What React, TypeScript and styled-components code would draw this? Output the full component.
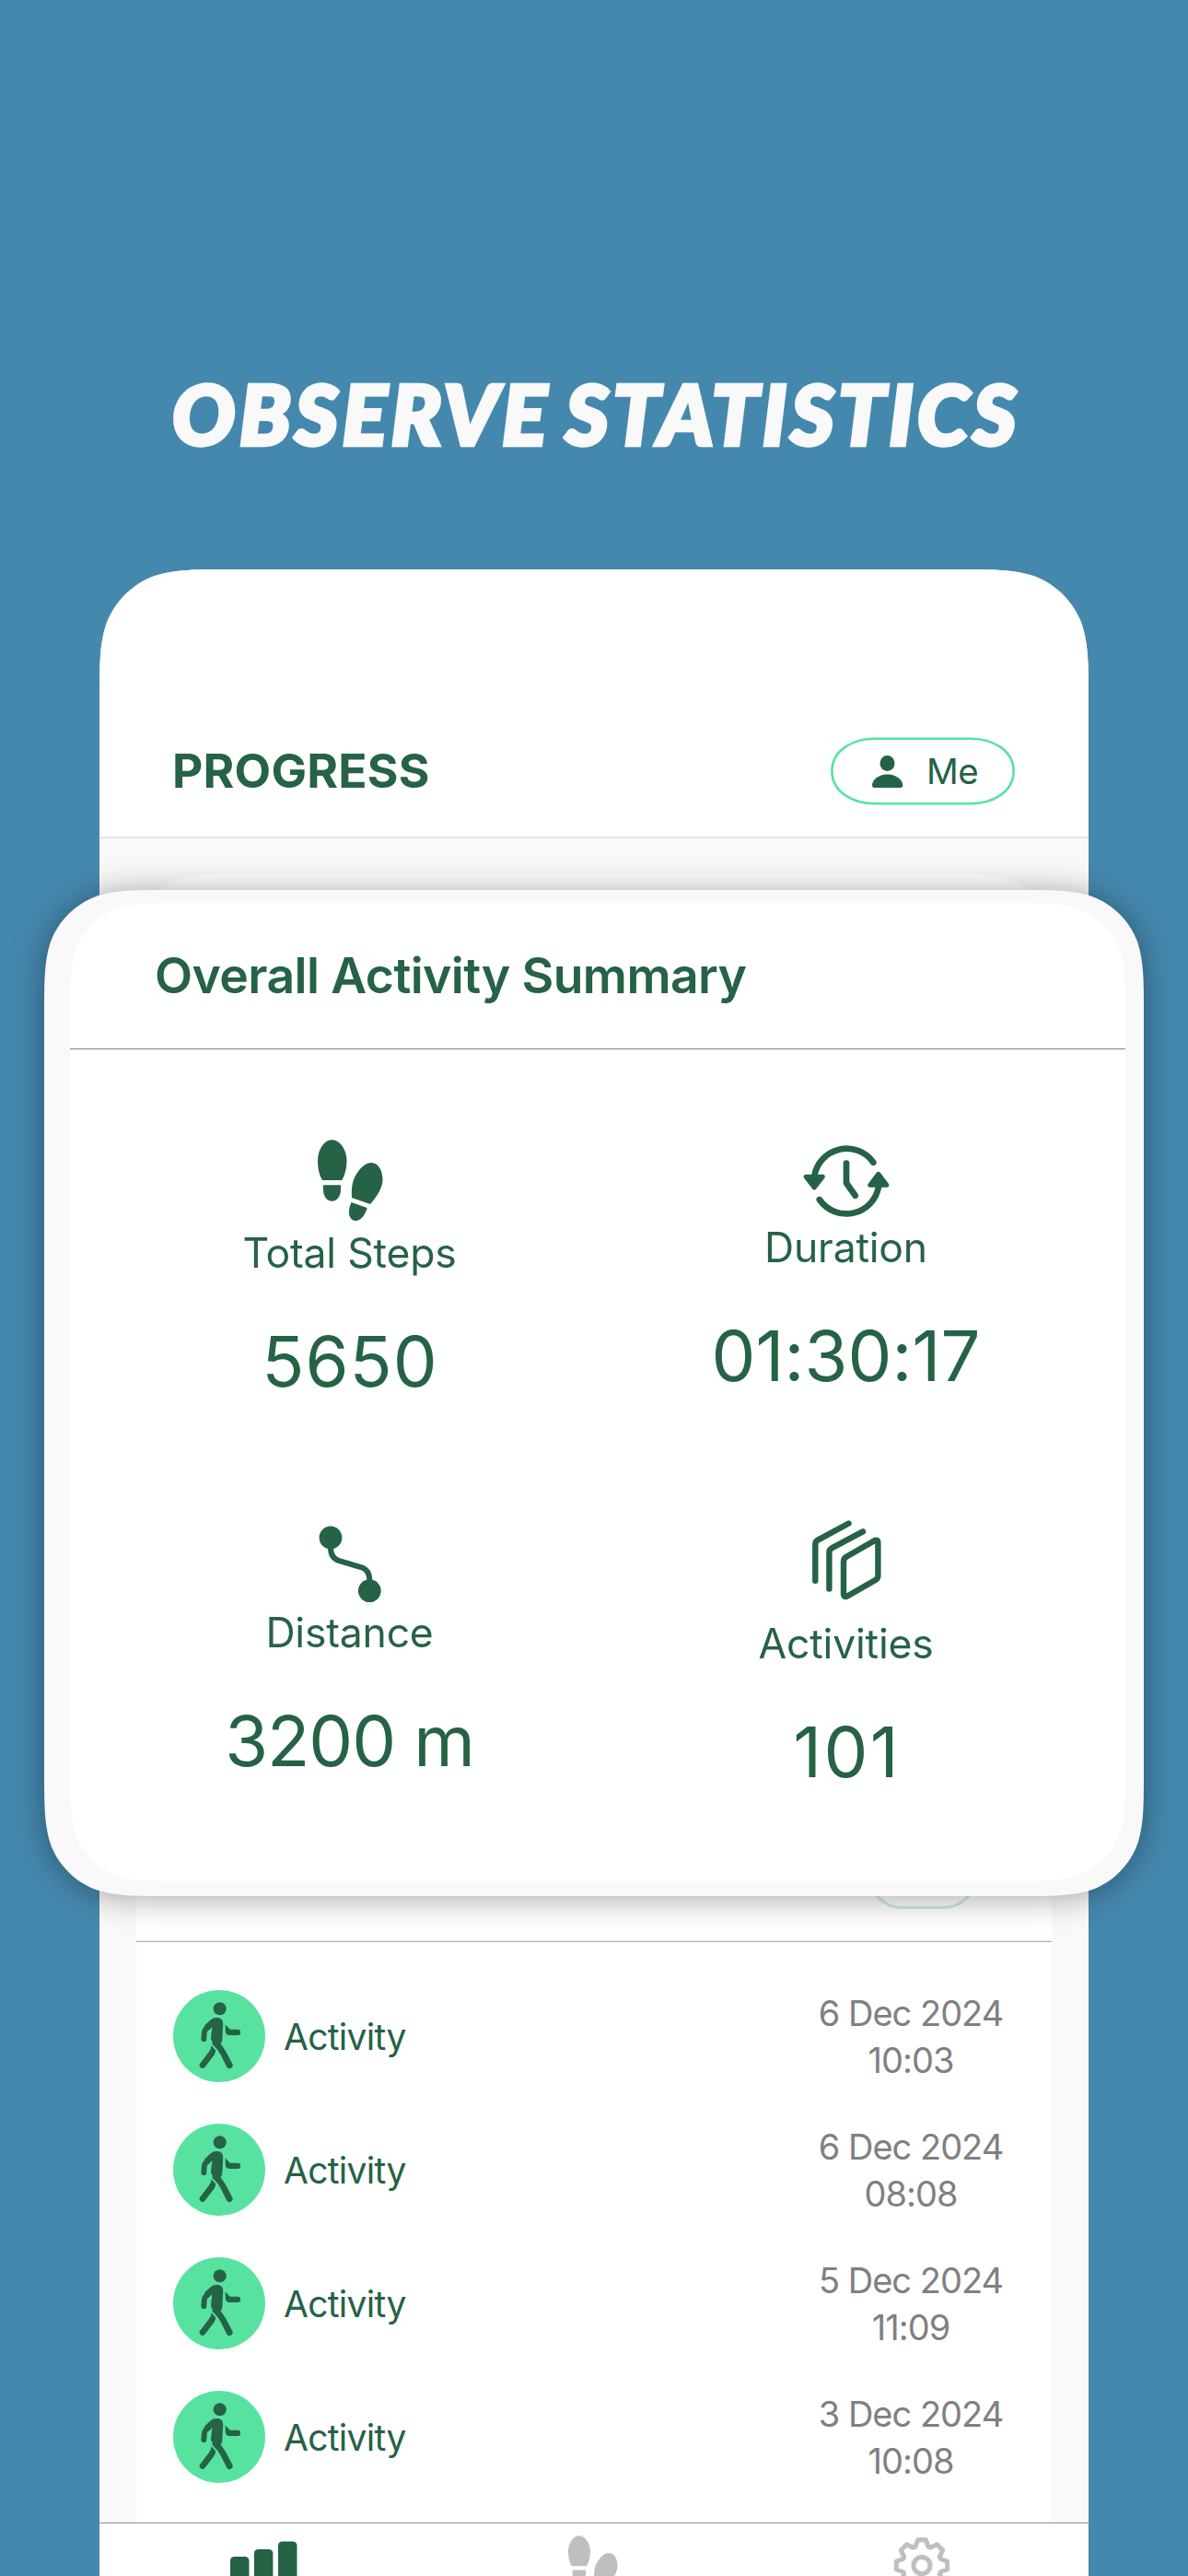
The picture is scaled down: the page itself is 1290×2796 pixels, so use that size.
import React from 'react';
import styled, { createGlobalStyle } from 'styled-components';

const GREEN = '#256246';
const MINT = '#58e2a0';
const GREY = '#bfbfbf';

/** iOS style continuous corners, as a path usable by clip-path */
function smoothRect(w: number, h: number, r: number, roundBottom = true): string {
  const a = 1.528665 * r;
  const b = 1.08849296 * r;
  const c = 0.86840694 * r;
  const d = 0.63149379 * r;
  const e = 0.37282383 * r;
  const f = 0.16905956 * r;
  const g = 0.07491139 * r;

  const top = `M${a} 0 L${w - a} 0 C${w - b} 0 ${w - c} 0 ${w - d} ${g} C${w - e} ${f} ${w - f} ${e} ${w - g} ${d} C${w} ${c} ${w} ${b} ${w} ${a}`;
  const bottom = roundBottom
    ? `L${w} ${h - a} C${w} ${h - b} ${w} ${h - c} ${w - g} ${h - d} C${w - f} ${h - e} ${w - e} ${h - f} ${w - d} ${h - g} C${w - c} ${h} ${w - b} ${h} ${w - a} ${h} L${a} ${h} C${b} ${h} ${c} ${h} ${d} ${h - g} C${e} ${h - f} ${f} ${h - e} ${g} ${h - d} C0 ${h - c} 0 ${h - b} 0 ${h - a}`
    : `L${w} ${h} L0 ${h}`;

  return `${top} ${bottom} L0 ${a} C0 ${b} 0 ${c} ${g} ${d} C${f} ${e} ${e} ${f} ${d} ${g} C${c} 0 ${b} 0 ${a} 0 Z`;
}

function gearPath(cx: number, cy: number): string {
  const point = (radius: number, deg: number) => {
    const rad = (deg * Math.PI) / 180;

    return `${(cx + radius * Math.sin(rad)).toFixed(2)} ${(cy - radius * Math.cos(rad)).toFixed(2)}`;
  };

  const teeth = Array.from({ length: 8 }, (_, i) => i * 45).map((deg) =>
    [point(21.5, deg - 19), point(28, deg - 9), point(28, deg + 9), point(21.5, deg + 19)].join(' L')
  );

  return `M${teeth.join(' L')} Z`;
}

const GlobalStyle = createGlobalStyle`
  html,
  body {
    margin: 0;
    background: #4588ae;
  }

  * {
    box-sizing: border-box;
  }

  svg {
    display: block;
    flex-shrink: 0;
  }
`;

const Page = styled.main`
  position: relative;
  display: flex;
  flex-direction: column;
  align-items: center;
  width: 1290px;
  height: 2796px;
  overflow: hidden;
  background: #4588ae;
  color: ${GREEN};
  font-family: Inter, 'Liberation Sans', sans-serif;
`;

const Headline = styled.h1`
  display: flex;
  align-items: center;
  justify-content: center;
  height: 618px;
  margin: 0;
  padding: 277px 0 0 5px;
  color: #f9f9f9;
  font: italic 900 90px/110px Lato, sans-serif;
  letter-spacing: 4.7px;
  word-spacing: -8px;
  white-space: nowrap;
  -webkit-text-stroke: 4.5px #f9f9f9;
`;

const Phone = styled.section`
  display: flex;
  flex-direction: column;
  width: 1074px;
  height: 2178px;
  background: #f9f9f9;
  clip-path: path('${smoothRect(1074, 2178, 95, false)}');
`;

const PhoneHeader = styled.header`
  display: flex;
  align-items: flex-start;
  justify-content: space-between;
  height: 292px;
  padding: 182px 80px 0 79px;
  border-bottom: 2px solid #e5e5e5;
  background: #fff;
`;

const ScreenTitle = styled.h2`
  margin: 0;
  font-size: 51.5px;
  font-weight: 700;
  letter-spacing: 0.2px;
  line-height: 73px;
`;

const MeButton = styled.div`
  display: grid;
  width: 200px;
  height: 74px;

  > * {
    grid-area: 1 / 1;
  }
`;

const MeLabel = styled.span`
  padding-left: 104px;
  font-size: 38.5px;
  letter-spacing: -0.5px;
  line-height: 74px;
`;

const Content = styled.div`
  display: flex;
  flex: 1;
  flex-direction: column;
  min-height: 0;
  overflow: hidden;
  padding: 39px 40px 0;
`;

const BackCard = styled.div`
  flex-shrink: 0;
  height: 900px;
  background: #fff;
  clip-path: path('${smoothRect(994, 900, 72)}');
`;

const ListCard = styled.div`
  flex: 1;
  margin-top: 40px;
  background: #fff;
`;

const ListHeader = styled.div`
  display: flex;
  align-items: flex-end;
  justify-content: flex-end;
  height: 219px;
  padding: 0 81px 35px 0;
  border-bottom: 1px solid #b0b0b0;
  box-shadow: inset 0 -1px #e4e4e4;
`;

const ListPill = styled.div`
  width: 118px;
  height: 74px;
  border: 3px solid #cdeedf;
  border-radius: 36px;
`;

const List = styled.div`
  display: flex;
  flex-direction: column;
  gap: 45px;
  padding: 52px 38px 0 40px;
`;

const Row = styled.div`
  display: flex;
  align-items: center;
  height: 100px;
`;

const RowIcon = styled.div`
  width: 100px;
  height: 100px;
  margin-right: 20px;
  border-radius: 50%;
  background: ${MINT};
`;

const RowName = styled.span`
  flex: 1;
  font-size: 39px;
  letter-spacing: -0.7px;
`;

const RowDate = styled.div`
  width: 230px;
  padding-top: 1px;
  color: #808080;
  font-size: 38px;
  letter-spacing: -1px;
  line-height: 51px;
  text-align: center;
`;

const TabBar = styled.nav`
  display: flex;
  justify-content: space-between;
  height: 58px;
  padding-right: 2px;
  border-top: 1px solid #9b9b9b;
  background: #fff;
  box-shadow: 0 -1px #e6e6e6;
`;

const Tab = styled.div`
  display: flex;
  flex: 1;
  justify-content: center;
`;

const SummaryShadow = styled.section`
  position: absolute;
  top: 966px;
  left: 48px;
  filter: drop-shadow(0 2px 18px rgba(0, 0, 0, 0.36));
`;

const SummaryFrame = styled.div`
  width: 1194px;
  height: 1092px;
  padding: 14px 20px 16px 28px;
  background: #f9f9f9;
  clip-path: path('${smoothRect(1194, 1092, 90)}');
`;

const Summary = styled.div`
  height: 1062px;
  background: #fff;
  clip-path: path('${smoothRect(1146, 1062, 82)}');
`;

const SummaryTitle = styled.h2`
  height: 159px;
  margin: 0;
  padding: 44px 0 0 92px;
  border-bottom: 1px solid #808080;
  font-size: 53.5px;
  font-weight: 600;
  letter-spacing: -0.6px;
  line-height: 69px;
`;

const StatGrid = styled.div`
  display: grid;
  grid-template-rows: 410px 410px;
  grid-template-columns: 539px 539px;
  padding: 81px 34px 0;
`;

const Stat = styled.div<{ $shift: number }>`
  display: flex;
  flex-direction: column;
  align-items: center;
  padding-top: ${({ $shift }) => $shift}px;
`;

const StatLabel = styled.span`
  font-size: 44.5px;
  letter-spacing: -0.2px;
  line-height: 60px;
`;

const StatValue = styled.span<{ $tracking: number }>`
  margin-top: 42px;
  padding-left: ${({ $tracking }) => Math.max($tracking, 0)}px;
  font-size: 76px;
  letter-spacing: ${({ $tracking }) => $tracking}px;
  line-height: 90px;
`;

function Footprints(): React.ReactElement {
  return (
    <>
      <path d='M40.3 17.3C49 17.3 56.5 28 56.5 40C56.5 49 54 56 51.3 61H30C27 56 25 49 25 40C25 28 32 17.3 40.3 17.3Z' />
      <path d='M31 66.3H50V71C50 78.5 46 83.7 40.3 83.7C35 83.7 31 78.5 31 71Z' />
      <path d='M83 42C91 42 95.5 51 95.5 60C95.5 70 89 79 82 87L62 80C61.5 69 62.5 60 68 53C72 46.5 78 42 83 42Z' />
      <path d='M61.5 85L78.7 91C76.5 99 71.5 105 66.3 105C61 105 58.5 100 59 94C59.2 91 60.3 88 61.5 85Z' />
    </>
  );
}

const StepsIcon = () => (
  <svg fill={GREEN} height='110' viewBox='0 0 120 110' width='120'>
    <Footprints />
  </svg>
);

const DurationIcon = () => (
  <svg fill='none' height='104' stroke={GREEN} strokeLinecap='round' strokeLinejoin='round' strokeWidth='6.7' viewBox='-1 0 140 104' width='140'>
    <path d='M98.3 41.7A35.5 35.5 0 0 0 34.2 57' />
    <path d='M39.8 82A35.5 35.5 0 0 0 104.2 67' />
    <path d='M69 42.6V64L78.7 77.7' />
    <path d='M25.2 57.2H43.3L34.2 69Z' fill={GREEN} strokeWidth='5' />
    <path d='M94.8 66.3H112.8L103.8 54.3Z' fill={GREEN} strokeWidth='5' />
  </svg>
);

const DistanceIcon = () => (
  <svg fill={GREEN} height='102' viewBox='0 0 120 102' width='120'>
    <circle cx='39' cy='29' r='12.4' />
    <circle cx='81.3' cy='86.7' r='12.4' />
    <path d='M39 40C39 47.5 42.5 52.3 48.5 54.2L72 61C78 63 81.3 67.5 81.3 75' fill='none' stroke={GREEN} strokeWidth='6' />
  </svg>
);

const ActivitiesIcon = () => (
  <svg fill='none' height='124' stroke={GREEN} strokeLinecap='round' strokeLinejoin='round' strokeWidth='6.4' viewBox='-1 0 140 124' width='140'>
    <path d='M35.3 85.8V46Q35.3 43.2 38 41.6L71.5 23.5' />
    <path d='M50.4 94.6V55Q50.4 52 53 50.4L87 32.4' />
    <path d='M66 65Q66 61.5 69 59.8L99 42.4Q103.4 40 103.4 45V80Q103.4 83.3 100.5 85L70.5 102.3Q66 104.8 66 99.5Z' />
  </svg>
);

const WalkIcon = () => (
  <svg fill={GREEN} height='100' stroke={GREEN} strokeLinecap='round' strokeLinejoin='round' strokeWidth='0' viewBox='0 0 100 100' width='100'>
    <circle cx='50.7' cy='20.2' r='7' />
    <path d='M47.3 30C52 30 54.3 32.5 54.2 37L53.4 53C53.3 56 52.4 57.5 51.2 58.6L47.5 59.5L43 56.5C41 54.5 40.8 53 41.2 50L42.4 40L38.7 43.8L34 38.5L40.5 32.6C42.5 30.8 44.5 30 47.3 30Z' />
    <path d='M38 40.2Q34.2 43 33.8 46.5L33.3 53.2' fill='none' strokeWidth='5.8' />
    <path d='M46 57.5Q51 62 54.5 68.5L61.2 81.6' fill='none' strokeWidth='6.8' />
    <path d='M56.7 37.5L61.8 42.8H70A3.1 3.1 0 0 1 70 49H61Q57 48.8 56.8 44.5Z' />
    <path d='M41.5 60.3L46.2 65.6Q46.2 68 44.4 70.4L39 67Q41.4 64.5 41.5 60.3Z' />
    <path d='M41.4 69.3L32 81.6' fill='none' strokeWidth='6.6' />
  </svg>
);

interface StatData {
  icon: React.ReactElement;
  label: string;
  tracking: number;
  value: string;
}

const STATS: StatData[] = [
  { icon: <StepsIcon />, label: 'Total Steps', tracking: 1, value: '5650' },
  { icon: <DurationIcon />, label: 'Duration', tracking: 0.1, value: '01:30:17' },
  { icon: <DistanceIcon />, label: 'Distance', tracking: -1.1, value: '3200 m' },
  { icon: <ActivitiesIcon />, label: 'Activities', tracking: 2.3, value: '101' }
];

const ACTIVITIES = [
  { date: '6 Dec 2024', time: '10:03' },
  { date: '6 Dec 2024', time: '08:08' },
  { date: '5 Dec 2024', time: '11:09' },
  { date: '3 Dec 2024', time: '10:08' }
];

function App(): React.ReactElement {
  return (
    <>
      <GlobalStyle />
      <Page>
        <Headline>OBSERVE STATISTICS</Headline>
        <Phone>
          <PhoneHeader>
            <ScreenTitle>PROGRESS</ScreenTitle>
            <MeButton>
              <svg height='74' viewBox='0 0 200 74' width='200'>
                <path d='M48 1.7H152C174 1.7 198.6 13 198.6 37S174 72.3 152 72.3H48C26 72.3 1.4 61 1.4 37S26 1.7 48 1.7Z' fill='none' stroke={MINT} strokeWidth='2.6' />
                <ellipse cx='61.5' cy='28.5' fill={GREEN} rx='8' ry='8.5' />
                <path d='M61.5 40.4C71 40.4 78.3 46.5 78.3 52.2Q78.3 55 75 55H48Q45 55 45 52.2C45 46.5 52 40.4 61.5 40.4Z' fill={GREEN} />
              </svg>
              <MeLabel>Me</MeLabel>
            </MeButton>
          </PhoneHeader>
          <Content>
            <BackCard />
            <ListCard>
              <ListHeader>
                <ListPill />
              </ListHeader>
              <List>
                {ACTIVITIES.map(({ date, time }) => (
                  <Row key={`${date} ${time}`}>
                    <RowIcon><WalkIcon /></RowIcon>
                    <RowName>Activity</RowName>
                    <RowDate>
                      <div>{date}</div>
                      <div>{time}</div>
                    </RowDate>
                  </Row>
                ))}
              </List>
            </ListCard>
          </Content>
          <TabBar>
            <Tab>
              <svg fill={GREEN} height='57' viewBox='250 2739 73 57' width='73'>
                <rect height='60' rx='4.5' width='20.5' x='250' y='2775' />
                <rect height='60' rx='4.5' width='20.5' x='275.9' y='2767' />
                <rect height='60' rx='4.5' width='20.5' x='302' y='2758.5' />
              </svg>
            </Tab>
            <Tab>
              <svg fill={GREY} height='57' viewBox='0 0 91 57' width='91'>
                <g transform='scale(0.76)'><Footprints /></g>
              </svg>
            </Tab>
            <Tab>
              <svg fill='none' height='57' stroke={GREY} strokeLinejoin='round' strokeWidth='5' viewBox='967 2739 70 57' width='70'>
                <path d={gearPath(1002, 2784.5)} />
                <circle cx='1002' cy='2784.5' r='9' />
              </svg>
            </Tab>
          </TabBar>
        </Phone>
        <SummaryShadow>
          <SummaryFrame>
            <Summary>
              <SummaryTitle>Overall Activity Summary</SummaryTitle>
              <StatGrid>
                {STATS.map(({ icon, label, tracking, value }, index) => (
                  <Stat $shift={index === 2 ? 10 : 0} key={label}>
                    {icon}
                    <StatLabel>{label}</StatLabel>
                    <StatValue $tracking={tracking}>{value}</StatValue>
                  </Stat>
                ))}
              </StatGrid>
            </Summary>
          </SummaryFrame>
        </SummaryShadow>
      </Page>
    </>
  );
}

export default App;
